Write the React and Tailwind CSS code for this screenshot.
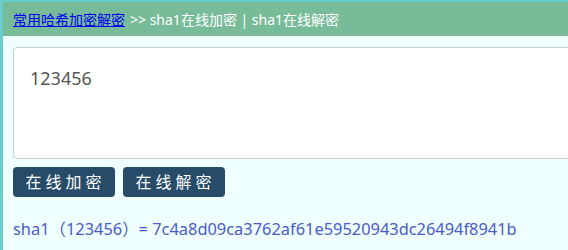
import React from "react";

export default function App() {
  const font = { fontFamily: '"Noto Sans", "Noto Sans CJK SC", sans-serif' };
  return (
    <div className="w-[568px] h-[250px] overflow-hidden bg-[#66cccc] pl-[3px] pt-[2px]" style={font}>
      <div className="h-full bg-[#f0ffff] flex flex-col">
        <div className="h-[34px] bg-[#77bb99] flex items-center pl-[10px] text-[14px] text-white whitespace-nowrap">
          <a href="#" className="text-[#0000ee] underline">常用哈希加密解密</a>
          <span className="ml-[5px]">&gt;&gt; sha1在线加密 | sha1在线解密</span>
        </div>
        <div className="pl-[10px] pt-[11px]">
          <div className="w-[600px] h-[112px] bg-white border border-[#cccccc] rounded-[4px] px-[16px] pt-[18px] text-[18px] leading-[24px] text-[#555555]">
            123456
          </div>
          <div className="flex gap-[8px] mt-[8px]">
            <button className="w-[102px] h-[30px] rounded-[4px] bg-[#264c6a] text-white text-[16px] tracking-[4px] pl-[3px]">在线加密</button>
            <button className="w-[102px] h-[30px] rounded-[4px] bg-[#264c6a] text-white text-[16px] tracking-[4px] pl-[3px]">在线解密</button>
          </div>
          <div className="mt-[21px] text-[16.4px] leading-[22px] text-[#4a5ac8] whitespace-nowrap">
            sha1（123456）= 7c4a8d09ca3762af61e59520943dc26494f8941b
          </div>
        </div>
      </div>
    </div>
  );
}
